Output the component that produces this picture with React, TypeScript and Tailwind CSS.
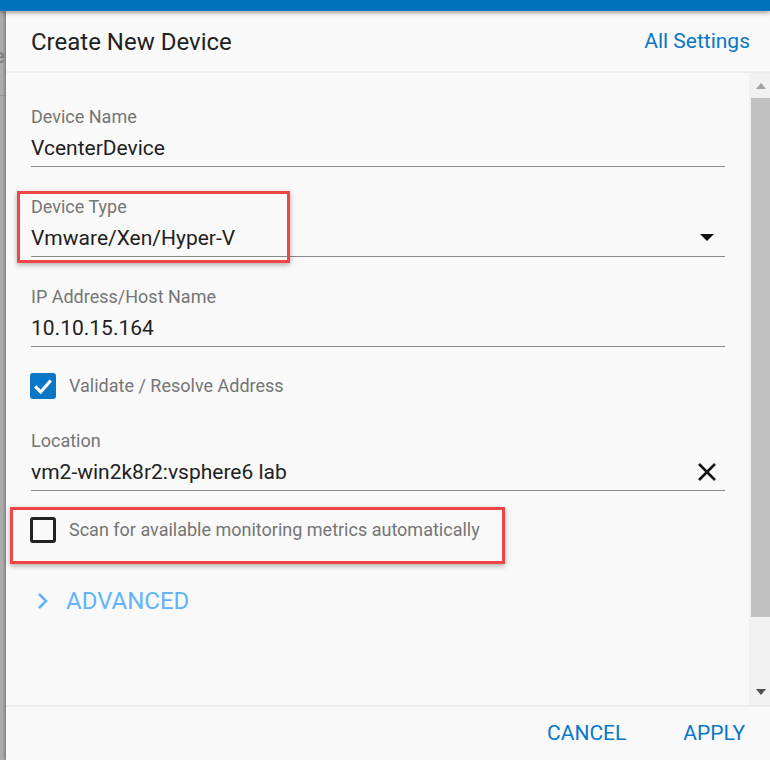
import React, { useState } from 'react';

const Field = ({
  label,
  value,
  right
}: {
  label: string;
  value: string;
  right?: React.ReactNode;
}) => {
  return <div>
      <div className="text-[18px] leading-[20px] text-[#757575]">{label}</div>
      <div className="mt-[7px] flex items-center justify-between border-b border-[#8a8a8a] pb-[4px]">
        <span className="text-[21px] leading-[28px] text-[#212121]">{value}</span>
        {right}
      </div>
    </div>;
};

const App = () => {
  const [validate, setValidate] = useState(true);
  const [scan, setScan] = useState(false);
  return <div className="relative h-[760px] w-[770px] overflow-hidden bg-[#acacac] font-['Roboto',sans-serif]">
      <div className="relative z-10 h-[11px] bg-[#0072bc] shadow-[0_2px_4px_rgba(0,0,0,0.35)]"></div>
      <div className="flex h-[749px]">
        <div className="w-[6px] overflow-hidden pt-[33px] text-[20px] leading-[24px] text-[#7a7a7a]">
          <span className="-ml-[6px] block">e</span>
          <div className="mt-[27px] h-px bg-[#9c9c9c]"></div>
        </div>
        <div className="flex flex-1 flex-col bg-[#f9f9f9] shadow-[-1px_0_3px_rgba(0,0,0,0.35)]">
          <div className="flex h-[60px] items-center justify-between pl-[25px] pr-[20px] pt-[2px]">
            <h2 className="text-[24px] text-[#212121]">Create New Device</h2>
            <button className="text-[21px] text-[#0a77c6]">All Settings</button>
          </div>
          <div className="h-[2px] bg-[#ececec]"></div>
          <div className="flex h-[632px]">
            <div className="flex-1 pl-[25px] pr-[24px] pt-[34px]">
              <Field label="Device Name" value="VcenterDevice" />
              <div className="mt-[30px]">
                <Field label="Device Type" value="Vmware/Xen/Hyper-V" right={<svg width="14" height="8" viewBox="0 0 14 8" className="mr-[11px]">
                      <path d="M0 0 L14 0 L7 7 Z" fill="#111" />
                    </svg>} />
              </div>
              <div className="mt-[30px]">
                <Field label="IP Address/Host Name" value="10.10.15.164" />
              </div>
              <label className="-ml-px mt-[26px] flex cursor-pointer items-center gap-[13px]" onClick={() => setValidate(!validate)}>
                <span className="flex h-[26px] w-[26px] items-center justify-center rounded-[3px] bg-[#0a77c6]">
                  {validate && <svg width="22" height="22" viewBox="0 0 24 24">
                      <path d="M3.5 12.5 L9.5 18.5 L20.5 6" fill="none" stroke="#fff" strokeWidth="3.4" />
                    </svg>}
                </span>
                <span className="text-[18px] leading-[22px] text-[#757575]">Validate / Resolve Address</span>
              </label>
              <div className="mt-[32px]">
                <Field label="Location" value="vm2-win2k8r2:vsphere6 lab" right={<svg width="20" height="20" viewBox="0 0 20 20" className="mr-[8px]">
                      <path d="M2 2 L18 18 M18 2 L2 18" stroke="#111" strokeWidth="2.5" />
                    </svg>} />
              </div>
              <label className="-ml-px mt-[26px] flex cursor-pointer items-center gap-[13px]" onClick={() => setScan(!scan)}>
                <span className="h-[26px] w-[26px] rounded-[3px] border-[3px] border-[#222]"></span>
                <span className="text-[18px] leading-[22px] text-[#757575]">Scan for available monitoring metrics automatically</span>
              </label>
              <button className="mt-[44px] flex items-center gap-[17px]">
                <svg width="14" height="18" viewBox="0 0 14 18" className="ml-[5px]">
                  <path d="M3 2 L10 9 L3 16" fill="none" stroke="#62b4f7" strokeWidth="2.6" />
                </svg>
                <span className="-ml-px text-[24px] leading-[28px] text-[#62b4f7]">ADVANCED</span>
              </button>
            </div>
            <div className="flex w-[21px] flex-col bg-[#f1f1f1]">
              <div className="flex h-[25px] items-center justify-center pl-[2px]">
                <svg width="10" height="6" viewBox="0 0 10 6">
                  <path d="M0 6 L5 0 L10 6 Z" fill="#a3a3a3" />
                </svg>
              </div>
              <div className="ml-[2px] h-[519px] bg-[#c1c1c1]"></div>
              <div className="flex flex-1 items-end justify-center pb-[10px] pl-[2px]">
                <svg width="10" height="6" viewBox="0 0 10 6">
                  <path d="M0 0 L10 0 L5 6 Z" fill="#505050" />
                </svg>
              </div>
            </div>
          </div>
          <div className="h-[2px] bg-[#ececec]"></div>
          <div className="flex flex-1 items-center justify-end gap-[57px] pr-[25px]">
            <button className="text-[21px] text-[#0a77c6]">CANCEL</button>
            <button className="text-[21px] text-[#0a77c6]">APPLY</button>
          </div>
        </div>
      </div>
      <div className="absolute left-[17px] top-[191px] h-[72px] w-[273px] border-[3px] border-[#f04545] shadow-[0_2px_5px_rgba(0,0,0,0.3)]"></div>
      <div className="absolute left-[10px] top-[507px] h-[57px] w-[495px] border-[3px] border-[#f04545] shadow-[0_2px_5px_rgba(0,0,0,0.3)]"></div>
    </div>;
};

export default App;
